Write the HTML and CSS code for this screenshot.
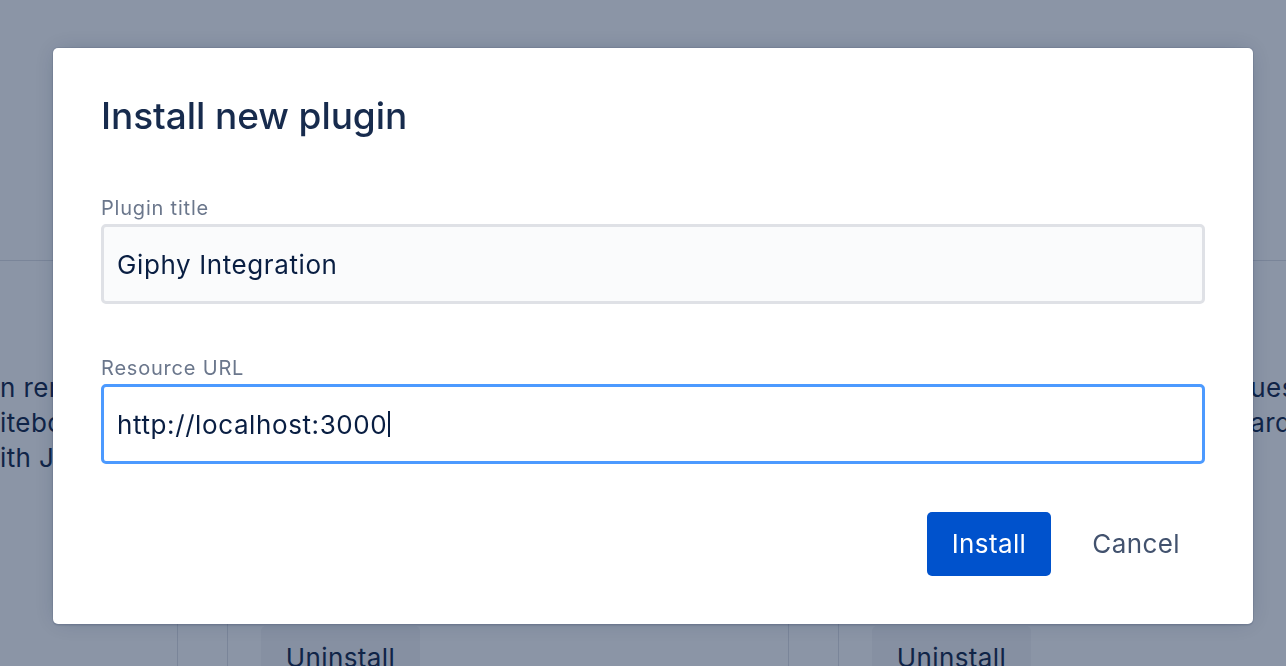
FILE: index.html
```html
<!DOCTYPE html>
<html lang="en">
<head>
<meta charset="utf-8">
<title>Install new plugin</title>
<link rel="stylesheet" href="styles.css">
</head>
<body>
<div class="page">
  <div class="page-header"></div>
  <div class="cards">
    <div class="card card-first">
      <p class="card-text">n remote<br>iteboard<br>ith Jira</p>
    </div>
    <div class="card">
      <div class="card-text"></div>
      <div class="card-actions"><span class="btn-uninstall">Uninstall</span></div>
    </div>
    <div class="card card-last">
      <p class="card-text card-text-offset">ques<br>oard</p>
      <div class="card-actions"><span class="btn-uninstall">Uninstall</span></div>
    </div>
  </div>
</div>

<div class="blanket"></div>

<div class="modal" role="dialog" aria-labelledby="modal-title">
  <h1 class="modal-title" id="modal-title">Install new plugin</h1>
  <div class="field">
    <label class="field-label">Plugin title</label>
    <div class="input">Giphy Integration</div>
  </div>
  <div class="field field-second">
    <label class="field-label">Resource URL</label>
    <div class="input input-focused">http://localhost:3000<span class="caret"></span></div>
  </div>
  <div class="modal-footer">
    <button class="btn btn-primary">Install</button>
    <button class="btn btn-subtle">Cancel</button>
  </div>
</div>
</body>
</html>
```
FILE: styles.css
```css
* { box-sizing: border-box; }

html, body {
  margin: 0;
  padding: 0;
  height: 100%;
  overflow: hidden;
}

body {
  font-family: Inter, "Liberation Sans", sans-serif;
  background: #ffffff;
  color: #172b4d;
}

/* Background page */
.page {
  width: 1286px;
  height: 666px;
  overflow: hidden;
}

.page-header {
  height: 261px;
  border-bottom: 1px solid #dfe1e6;
}

.cards {
  display: grid;
  grid-template-columns: 178px 562px 562px;
  column-gap: 49px;
  margin-top: 40px;
}

.card {
  border: 1px solid #dfe1e6;
  border-top: none;
  height: 400px;
  padding: 69px 0 0 33px;
}

.card-first {
  border-left: none;
  padding-left: 0;
}

.card-text {
  margin: 0;
  height: 105px;
  font-size: 26px;
  line-height: 35px;
  letter-spacing: 0.4px;
  white-space: nowrap;
  color: #172b4d;
}

.card-text-offset {
  padding-left: 362px;
}

.card-actions {
  margin-top: 149px;
}

.btn-uninstall {
  display: inline-block;
  width: 159px;
  height: 64px;
  line-height: 64px;
  text-align: center;
  font-size: 26px;
  letter-spacing: 0.4px;
  color: #172b4d;
  background: rgba(9, 30, 66, 0.04);
  border-radius: 5px;
  transform: translateY(2px);
}

/* Blanket */
.blanket {
  position: fixed;
  inset: 0;
  background: rgba(9, 30, 66, 0.47);
}

/* Modal */
.modal {
  position: fixed;
  left: 53px;
  top: 48px;
  width: 1200px;
  height: 576px;
  background: #ffffff;
  border-radius: 5px;
  box-shadow: 0 0 0 1px rgba(9, 30, 66, 0.08), 0 2px 1px rgba(9, 30, 66, 0.08), 0 0 20px -6px rgba(9, 30, 66, 0.31);
  padding: 46px 48px 48px;
  display: flex;
  flex-direction: column;
}

.modal-title {
  margin: 0;
  font-size: 37px;
  line-height: 44px;
  font-weight: 500;
  color: #172b4d;
  letter-spacing: -0.002em;
}

.field {
  margin-top: 58px;
  display: flex;
  flex-direction: column;
  gap: 4px;
}

.field-second {
  margin-top: 52px;
}

.field-label {
  font-size: 20px;
  line-height: 24px;
  letter-spacing: 0.8px;
  color: #6b778c;
}

.input {
  height: 80px;
  border: 3px solid #dfe1e6;
  border-radius: 5px;
  background: #fafbfc;
  padding: 0 13px;
  display: flex;
  align-items: center;
  font-size: 26px;
  letter-spacing: 0.6px;
  color: #091e42;
}

.input-focused {
  border-color: #4c9aff;
  background: #ffffff;
}

.caret {
  display: inline-block;
  width: 2px;
  height: 26px;
  background: #091e42;
  margin-left: 1px;
}

.modal-footer {
  margin-top: 48px;
  display: flex;
  justify-content: flex-end;
  gap: 16px;
}

.btn {
  height: 64px;
  padding: 0 25px;
  border: none;
  border-radius: 5px;
  font-family: inherit;
  font-size: 26px;
  letter-spacing: 0.4px;
  line-height: 64px;
  cursor: pointer;
}

.btn-primary {
  background: #0052cc;
  color: #ffffff;
}

.btn-subtle {
  background: transparent;
  color: #42526e;
}
```
